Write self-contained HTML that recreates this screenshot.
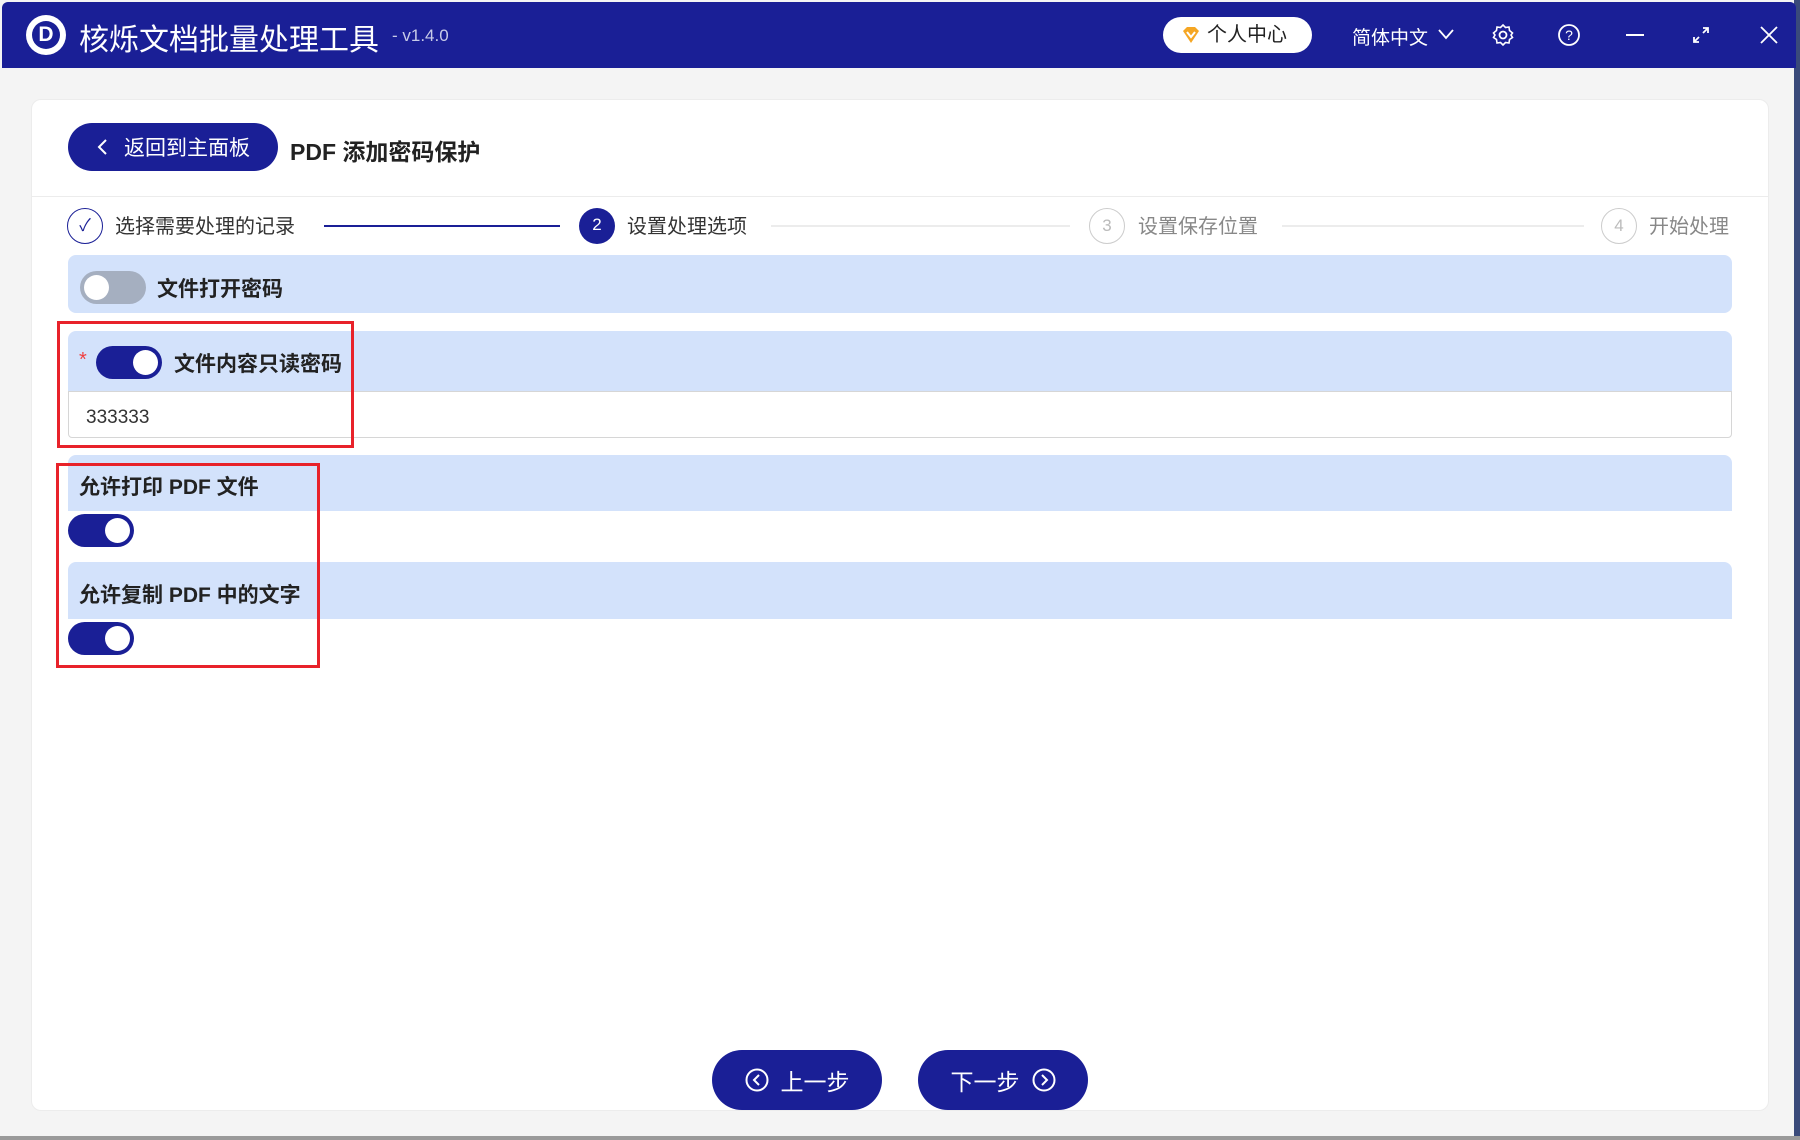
<!DOCTYPE html>
<html><head><meta charset="utf-8"><style>
*{box-sizing:border-box;margin:0;padding:0}
body{width:1800px;height:1140px;background:#f4f4f4;font-family:"Liberation Sans","Noto Sans CJK SC",sans-serif;position:relative;overflow:hidden}
.abs{position:absolute}
.tb{left:2px;top:2px;width:1794px;height:66px;background:#1a1f96;border-radius:6px 6px 0 0}
.card{left:31px;top:99px;width:1738px;height:1012px;background:#fff;border:1px solid #ececec;border-radius:10px}
.sec{background:#d3e2fb;border-radius:8px 8px 0 0;left:68px;width:1664px}
.tg{width:66px;height:33px;border-radius:17px;background:#1a1f96}
.tg i{position:absolute;top:4px;right:4px;width:25px;height:25px;border-radius:50%;background:#fff}
.tg.off{background:#a5afc0}
.tg.off i{left:4px;right:auto}
.lb{font-weight:bold;font-size:21px;color:#222}
.red{border:3px solid #e8222a}
.circ{width:36px;height:36px;border-radius:50%;text-align:center;line-height:34px;font-size:17px}
.st{font-size:20px;color:#333}
.btn{background:#1a1f96;color:#fff;border-radius:30px;height:60px;width:170px;font-size:23px;display:flex;align-items:center;justify-content:center;gap:12px}
</style></head><body>
<div class="abs" style="right:0;top:0;width:6px;height:1140px;background:#3a4a7a"></div>
<div class="abs" style="left:0;bottom:0;width:1800px;height:4px;background:#9a9a9a"></div>
<div class="abs tb"></div>
<div class="abs" style="left:26px;top:15px;width:40px;height:40px;border-radius:50%;background:#fff"></div>
<div class="abs" style="left:32px;top:21px;width:28px;height:28px;border-radius:50%;background:#1a1f96;color:#fff;font-weight:bold;font-size:21px;text-align:center;line-height:28px">D</div>
<div class="abs" style="left:79px;top:15px;color:#fff;font-size:30px">核烁文档批量处理工具</div>
<div class="abs" style="left:392px;top:26px;color:#c8cbe8;font-size:17px">- v1.4.0</div>
<div class="abs" style="left:1163px;top:17px;width:149px;height:36px;background:#fff;border-radius:18px;font-size:20px;color:#222;line-height:36px;padding-left:44px">个人中心</div>
<svg class="abs" style="left:1181px;top:25px" width="20" height="20" viewBox="0 0 20 20"><path d="M2 6 L6 2 H14 L18 6 L10 18 Z" fill="#f5a623"/><path d="M6 7 L10 12 L14 7" stroke="#fff" stroke-width="2" fill="none"/></svg>
<div class="abs" style="left:1352px;top:23px;color:#fff;font-size:19px">简体中文</div>
<svg class="abs" style="left:1438px;top:27px" width="16" height="14"><path d="M1 3 L8 11 L15 3" stroke="#fff" stroke-width="1.8" fill="none"/></svg>
<svg class="abs" style="left:1491px;top:23px" width="24" height="24" viewBox="0 0 24 24"><circle cx="12" cy="12" r="3.5" stroke="#fff" stroke-width="1.8" fill="none"/><path d="M12 2 L14.5 4.5 L18 4 L18.5 7.5 L21.5 10 L20 12 L21.5 14.5 L18.5 16.5 L18 20 L14.5 19.5 L12 22 L9.5 19.5 L6 20 L5.5 16.5 L2.5 14.5 L4 12 L2.5 10 L5.5 7.5 L6 4 L9.5 4.5 Z" stroke="#fff" stroke-width="1.6" fill="none"/></svg>
<svg class="abs" style="left:1557px;top:23px" width="24" height="24"><circle cx="12" cy="12" r="10" stroke="#fff" stroke-width="1.8" fill="none"/><text x="12" y="17" fill="#fff" font-size="14" text-anchor="middle" font-family="Liberation Sans">?</text></svg>
<div class="abs" style="left:1626px;top:34px;width:18px;height:2px;background:#fff"></div>
<svg class="abs" style="left:1692px;top:26px" width="18" height="18"><path d="M11 2 H16 V7 M16 2 L11 7 M7 16 H2 V11 M2 16 L7 11" stroke="#fff" stroke-width="1.8" fill="none"/></svg>
<svg class="abs" style="left:1759px;top:25px" width="20" height="20"><path d="M2 2 L18 18 M18 2 L2 18" stroke="#fff" stroke-width="1.8"/></svg>

<div class="abs card"></div>
<div class="abs" style="left:32px;top:196px;width:1736px;height:1px;background:#ececec"></div>
<div class="abs btn" style="left:68px;top:123px;width:210px;height:48px;border-radius:24px;font-size:21px;gap:16px"><svg width="12" height="18"><path d="M10 2 L3 9 L10 16" stroke="#fff" stroke-width="2" fill="none"/></svg>返回到主面板</div>
<div class="abs" style="left:290px;top:133px;font-weight:bold;font-size:23px;color:#222">PDF 添加密码保护</div>

<div class="abs circ" style="left:67px;top:208px;border:1.5px solid #1a1f96;color:#1a1f96">✓</div>
<div class="abs st" style="left:115px;top:210px">选择需要处理的记录</div>
<div class="abs" style="left:324px;top:225px;width:236px;height:2px;background:#1a1f96"></div>
<div class="abs circ" style="left:579px;top:208px;background:#1a1f96;color:#fff">2</div>
<div class="abs st" style="left:627px;top:210px">设置处理选项</div>
<div class="abs" style="left:771px;top:225px;width:299px;height:2px;background:#ececec"></div>
<div class="abs circ" style="left:1089px;top:208px;border:1.5px solid #ccc;color:#bbb">3</div>
<div class="abs st" style="left:1138px;top:210px;color:#888">设置保存位置</div>
<div class="abs" style="left:1282px;top:225px;width:302px;height:2px;background:#ececec"></div>
<div class="abs circ" style="left:1601px;top:208px;border:1.5px solid #ccc;color:#bbb">4</div>
<div class="abs st" style="left:1649px;top:210px;color:#888">开始处理</div>

<div class="abs sec" style="top:255px;height:58px;border-radius:8px"></div>
<div class="abs tg off" style="left:80px;top:271px"><i></i></div>
<div class="abs lb" style="left:157px;top:273px">文件打开密码</div>

<div class="abs sec" style="top:331px;height:61px"></div>
<div class="abs" style="left:68px;top:391px;width:1664px;height:47px;border:1px solid #d6d6d6;border-radius:0 0 4px 4px"></div>
<div class="abs" style="left:79px;top:349px;color:#f04040;font-size:20px">*</div>
<div class="abs tg" style="left:96px;top:346px"><i></i></div>
<div class="abs lb" style="left:174px;top:348px">文件内容只读密码</div>
<div class="abs" style="left:86px;top:407px;font-size:19px;color:#333">333333</div>

<div class="abs sec" style="top:455px;height:56px"></div>
<div class="abs lb" style="left:79px;top:471px">允许打印 PDF 文件</div>
<div class="abs tg" style="left:68px;top:514px"><i></i></div>
<div class="abs sec" style="top:562px;height:57px"></div>
<div class="abs lb" style="left:79px;top:579px">允许复制 PDF 中的文字</div>
<div class="abs tg" style="left:68px;top:622px"><i></i></div>

<div class="abs red" style="left:57px;top:321px;width:297px;height:127px"></div>
<div class="abs red" style="left:56px;top:463px;width:264px;height:205px"></div>

<div class="abs btn" style="left:712px;top:1050px"><svg width="24" height="24"><circle cx="12" cy="12" r="10.5" stroke="#fff" stroke-width="2" fill="none"/><path d="M14 7 L9 12 L14 17" stroke="#fff" stroke-width="2" fill="none"/></svg>上一步</div>
<div class="abs btn" style="left:918px;top:1050px">下一步<svg width="24" height="24"><circle cx="12" cy="12" r="10.5" stroke="#fff" stroke-width="2" fill="none"/><path d="M10 7 L15 12 L10 17" stroke="#fff" stroke-width="2" fill="none"/></svg></div>
</body></html>
